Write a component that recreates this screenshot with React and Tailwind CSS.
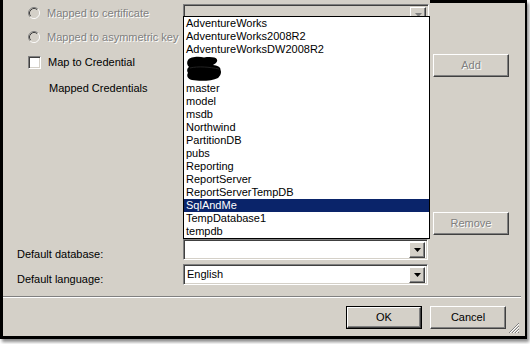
import React from 'react';

const raised =
  'border border-t-white border-l-white border-r-[#404040] border-b-[#404040] shadow-[inset_-1px_-1px_0_#808080]';
const sunken =
  'border border-t-[#808080] border-l-[#808080] border-r-white border-b-white shadow-[inset_1px_1px_0_#404040,inset_-1px_-1px_0_#d4d0c8]';
const disabledText = 'text-[#808080] [text-shadow:1px_1px_0_#ffffff]';

const databases = [
  'AdventureWorks',
  'AdventureWorks2008R2',
  'AdventureWorksDW2008R2',
  null,
  null,
  'master',
  'model',
  'msdb',
  'Northwind',
  'PartitionDB',
  'pubs',
  'Reporting',
  'ReportServer',
  'ReportServerTempDB',
  'SqlAndMe',
  'TempDatabase1',
  'tempdb',
];

const Radio = () => (
  <svg width="12" height="12" viewBox="0 0 12 12" className="shrink-0">
    <circle cx="6" cy="6" r="5" fill="#d4d0c8" />
    <path d="M2.11 9.89 A5.5 5.5 0 0 1 9.89 2.11" fill="none" stroke="#808080" />
    <path d="M9.89 2.11 A5.5 5.5 0 0 1 2.11 9.89" fill="none" stroke="#ffffff" />
    <path d="M2.82 9.18 A4.5 4.5 0 0 1 9.18 2.82" fill="none" stroke="#404040" />
    <path d="M9.18 2.82 A4.5 4.5 0 0 1 2.82 9.18" fill="none" stroke="#d4d0c8" />
  </svg>
);

const Arrow = ({ disabled }) => (
  <div className={`w-[16px] h-[16px] bg-[#d4d0c8] flex items-center justify-center ${raised}`}>
    <svg width="7" height="4" viewBox="0 0 7 4">
      <polygon points="0,0 7,0 3.5,4" fill={disabled ? '#808080' : '#000000'} />
    </svg>
  </div>
);

const Combo = ({ value, width, disabled, className = '' }) => (
  <div
    className={`h-[21px] flex items-center justify-between pl-[3px] pr-[2px] ${
      disabled ? 'bg-[#d4d0c8]' : 'bg-white'
    } ${sunken} ${className}`}
    style={{ width }}
  >
    <span className="leading-[13px]">{value}</span>
    <Arrow disabled={disabled} />
  </div>
);

const Button = ({ label, disabled, isDefault }) => {
  const inner = (
    <div
      className={`w-full h-full flex items-center justify-center bg-[#d4d0c8] ${raised} ${
        disabled ? disabledText : 'text-black'
      }`}
    >
      {label}
    </div>
  );
  if (isDefault) {
    return <div className="w-[76px] h-[23px] border border-black">{inner}</div>;
  }
  return <div className="w-[76px] h-[23px]">{inner}</div>;
};

// scribbled-out names in the list
const Scribble = () => (
  <svg width="40" height="26" viewBox="0 0 40 26" className="block">
    <path
      d="M2 4 C4 1 12 0 18 1.5 C24 0.5 30 1 31 3.5 C32 6 29 8 27 9 C31 9.5 35 11 34.5 14 C36 17 34 20 32 22 C26 25 14 25.5 6 24 C1 23 0.5 19 2 17 C0.5 15 1 12 3 11 C1 9.5 0.5 6 2 4 Z"
      fill="#000"
    />
    <path d="M4 12 C12 10 24 11 33 13" stroke="#222" strokeWidth="1" fill="none" />
  </svg>
);

export default function App() {
  return (
    <div className="w-[530px] h-[344px] bg-white font-['Liberation_Sans',Arial,sans-serif] text-[11px] text-black">
      <div className="relative w-[527px] h-[339px] bg-[#d4d0c8] border-l-[3px] border-r-2 border-b-[3px] border-black shadow-[2px_3px_3px_rgba(0,0,0,0.45)] flex flex-col">
        <div className="absolute top-0 left-[427px] right-0 h-[3px] bg-black" />

        <div className="h-[296px] flex">
          {/* left column */}
          <div className="w-[427px] flex flex-col">
            <div className="mt-[3px] h-[20px] flex items-center">
              <div className="w-[180px] flex items-center pl-[25px] gap-[7px]">
                <Radio />
                <span className={`leading-[13px] whitespace-nowrap ${disabledText}`}>Mapped to certificate</span>
              </div>
              <Combo width={246} disabled className="self-start mt-[1px]" />
            </div>
            <div className="mt-[4px] h-[20px] flex items-center pl-[25px] gap-[7px]">
              <Radio />
              <span className={`leading-[13px] whitespace-nowrap ${disabledText}`}>Mapped to asymmetric key</span>
            </div>
            <div className="mt-[5px] h-[20px] flex items-center pl-[25px] gap-[7px]">
              <div className={`w-[13px] h-[13px] bg-white ${sunken}`} />
              <span className="leading-[13px]">Map to Credential</span>
            </div>
            <div className="mt-[6px] h-[20px] flex items-center pl-[46px]">
              <span className="leading-[13px]">Mapped Credentials</span>
            </div>

            <div className="mt-[141px] h-[20px] flex items-start">
              <span className="w-[180px] pl-[14px] mt-[9px] leading-[13px]">Default database:</span>
              <Combo width={245} value="" className="h-[20px]" />
            </div>
            <div className="mt-[5px] h-[20px] flex items-start">
              <span className="w-[180px] pl-[14px] mt-[9px] leading-[13px]">Default language:</span>
              <Combo width={245} value="English" className="h-[20px]" />
            </div>
          </div>

          {/* right column */}
          <div className="ml-[3px] w-[76px] flex flex-col">
            <div className="mt-[54px] h-[22px]">
              <Button label="Add" disabled />
            </div>
            <div className="mt-[136px] h-[22px]">
              <Button label="Remove" disabled />
            </div>
          </div>
        </div>

        <div className="h-[2px] mr-[4px] border-t border-t-[#808080] border-b border-b-white" />

        <div className="flex justify-end gap-[8px] pt-[8px] pr-[19px]">
          <Button label="OK" isDefault />
          <Button label="Cancel" />
        </div>

        {/* size grip */}
        <svg width="12" height="12" viewBox="0 0 12 12" className="absolute right-[5px] bottom-[2px]">
          <path d="M11 1 L1 11 M11 4 L4 11 M11 7 L7 11 M11 10 L10 11" stroke="#808080" strokeWidth="1" />
          <path d="M11 2 L2 11 M11 5 L5 11 M11 8 L8 11" stroke="#ffffff" strokeWidth="1" />
        </svg>

        {/* open dropdown list */}
        <div className="absolute left-[180px] top-[16px] w-[247px] h-[223px] bg-white border border-black">
          {databases.map((name, i) => (
            <div
              key={i}
              className={`h-[13px] leading-[13px] pl-[2px] whitespace-nowrap ${
                name === 'SqlAndMe' ? 'bg-[#0a246a] text-white' : ''
              }`}
            >
              {name === null ? (i === 3 ? <div className="pt-[0px]"><Scribble /></div> : null) : name}
            </div>
          ))}
        </div>
      </div>
    </div>
  );
}
